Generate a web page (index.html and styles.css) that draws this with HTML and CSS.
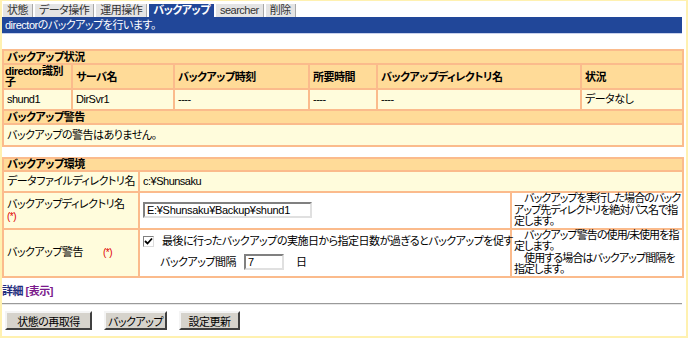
FILE: index.html
```html
<!DOCTYPE html>
<html lang="ja">
<head>
    <meta charset="UTF-8">
    <title>バックアップ</title>
    <link rel="stylesheet" href="styles.css">
</head>
<body>

<div class="frame">
    <div class="tabs">
        <span class="tab">状態</span>
        <span class="tab">データ操作</span>
        <span class="tab">運用操作</span>
        <span class="tab active">バックアップ</span>
        <span class="tab">searcher</span>
        <span class="tab">削除</span>
    </div>
    <div class="bar">directorのバックアップを行います。</div>

    <table class="grid status">
        <colgroup>
            <col style="width:69px"><col style="width:102px"><col style="width:135px">
            <col style="width:68px"><col style="width:204px"><col style="width:102px">
        </colgroup>
        <tr><td class="title" colspan="6">バックアップ状況</td></tr>
        <tr class="heads">
            <th class="first">director識別子</th>
            <th>サーバ名</th>
            <th>バックアップ時刻</th>
            <th>所要時間</th>
            <th>バックアップディレクトリ名</th>
            <th>状況</th>
        </tr>
        <tr class="data">
            <td>shund1</td>
            <td>DirSvr1</td>
            <td>----</td>
            <td>----</td>
            <td>----</td>
            <td>データなし</td>
        </tr>
        <tr><td class="title" colspan="6">バックアップ警告</td></tr>
        <tr class="data msg"><td colspan="6">バックアップの警告はありません。</td></tr>
    </table>

    <table class="grid env">
        <colgroup>
            <col style="width:136px"><col style="width:372px"><col style="width:172px">
        </colgroup>
        <tr><td class="title slim" colspan="3">バックアップ環境</td></tr>
        <tr class="data">
            <td class="label">データファイルディレクトリ名</td>
            <td colspan="2">c:¥Shunsaku</td>
        </tr>
        <tr>
            <td class="label">バックアップディレクトリ名<br><span class="req">(*)</span></td>
            <td class="field"><input class="text wide" type="text" value="E:¥Shunsaku¥Backup¥shund1"></td>
            <td class="help">　バックアップを実行した場合のバック<br>アップ先ディレクトリを絶対パス名で指<br>定します。</td>
        </tr>
        <tr>
            <td class="label">バックアップ警告<span class="req gap">(*)</span></td>
            <td class="field warn">
                <div class="check-line">
                    <span class="check"><svg width="9" height="9" viewBox="0 0 9 9"><path d="M1 4 L3.5 6.5 L8 1.5" fill="none" stroke="#000" stroke-width="1.8"/></svg></span>
                    最後に行ったバックアップの実施日から指定日数が過ぎるとバックアップを促す
                </div>
                <div class="interval">
                    バックアップ間隔 <input class="text small" type="text" value="7"> <span class="unit">日</span>
                </div>
            </td>
            <td class="help">　バックアップ警告の使用/未使用を指<br>定します。<br>　使用する場合はバックアップ間隔を<br>指定します。</td>
        </tr>
    </table>

    <div class="detail">詳細 <span class="show">[表示]</span></div>
    <hr>
    <div class="actions">
        <button type="button" class="b1">状態の再取得</button>
        <button type="button" class="b2">バックアップ</button>
        <button type="button" class="b3">設定更新</button>
    </div>
</div>

</body>
</html>
```

FILE: styles.css
```css
body {
    margin: 0;
    font-family: "Liberation Sans", "Noto Sans CJK JP", sans-serif;
    font-size: 11px;
    font-feature-settings: "palt";
    letter-spacing: -0.5px;
    color: #000;
    background: #fff;
}
.frame {
    width: 688px;
    height: 338px;
    box-sizing: border-box;
    border: 2px solid #fff1b0;
    border-top-width: 1px;
    padding: 3px 4px 0 0;
    overflow: hidden;
}
.tabs {
    display: flex;
    gap: 2px;
    padding-left: 1px;
}
.tab {
    height: 13px;
    line-height: 13px;
    padding: 0 4px;
    background: #e4e4e4;
    border-right: 1px solid #a8a8a8;
    color: #333;
}
.tab.active {
    background: #214799;
    color: #fff;
    font-weight: bold;
    border-right: none;
}
.bar {
    height: 16px;
    line-height: 16px;
    padding-left: 3px;
    background: #214799;
    color: #fff;
    border-bottom: 1px solid #c8d1ec;
}
.grid {
    width: 680px;
    table-layout: fixed;
    border-collapse: collapse;
    border: 2px solid #fbbb8c;
}
.grid td, .grid th {
    border: 2px solid #fbbb8c;
    padding: 0 3px;
    line-height: 12px;
    text-align: left;
    vertical-align: middle;
}
.grid .title {
    background: #ffdb98;
    font-weight: bold;
}
.grid .title.slim {
    line-height: 11px;
}
.status {
    margin-top: 15px;
}
.heads th {
    background: #ffdb98;
    font-weight: bold;
    line-height: 11px;
    padding-top: 1px;
}
.heads th.first {
    padding: 1px 0 0 1px;
}
.data td {
    background: #fffcdc;
    padding-top: 3px;
    padding-bottom: 4px;
}
.msg td {
    padding-top: 4px;
    padding-bottom: 4px;
}
.env {
    margin-top: 10px;
}
.env .label {
    background: #fffcdc;
    white-space: nowrap;
}
.req {
    color: #e00000;
    font-size: 10px;
}
.req.gap {
    margin-left: 20px;
}
.field {
    padding-left: 6px;
}
input.text {
    font-family: "Liberation Sans", "Noto Sans CJK JP", sans-serif;
    font-size: 11px;
    letter-spacing: -0.3px;
    height: 16px;
    box-sizing: border-box;
    padding: 0 2px;
    border: 2px solid;
    border-color: #808080 #e0e0e0 #e0e0e0 #808080;
    background: #fff;
    vertical-align: middle;
}
input.wide {
    width: 169px;
}
input.small {
    width: 40px;
    margin-left: 8px;
}
.grid .help {
    padding: 0 2px;
    line-height: 11.5px;
    vertical-align: top;
    white-space: nowrap;
    letter-spacing: -0.9px;
}
.warn {
    padding: 0 0 0 10px;
    white-space: nowrap;
}
.check-line {
    display: flex;
    align-items: center;
    gap: 8px;
    height: 19px;
}
.check {
    width: 11px;
    height: 11px;
    box-sizing: border-box;
    border: 1px solid;
    border-color: #808080 #dcdcdc #dcdcdc #808080;
    background: #fff;
    display: flex;
    align-items: center;
    justify-content: center;
}
.interval {
    height: 23px;
    display: flex;
    align-items: center;
    padding-left: 17px;
}
.unit {
    margin-left: 12px;
}
.detail {
    margin-top: 7px;
    line-height: 13px;
    font-weight: bold;
    color: #1f2d7c;
}
.detail .show {
    color: #7a1a8c;
}
hr {
    margin: 5px 0 0;
    height: 0;
    border: none;
    border-top: 1px solid #9a9a9a;
    border-bottom: 1px solid #e8e8e8;
}
.actions {
    display: flex;
    gap: 12px;
    margin-top: 6px;
    padding-left: 3px;
}
button {
    font-family: "Liberation Sans", "Noto Sans CJK JP", sans-serif;
    font-size: 11px;
    font-feature-settings: "palt";
    letter-spacing: -0.5px;
    height: 19px;
    padding: 0;
    background: #d6d3cc;
    border: 2px solid;
    border-color: #f4f4f4 #404040 #404040 #f4f4f4;
    color: #000;
}
.b1 {
    width: 87px;
}
.b2 {
    width: 63px;
}
.b3 {
    width: 61px;
}
```
